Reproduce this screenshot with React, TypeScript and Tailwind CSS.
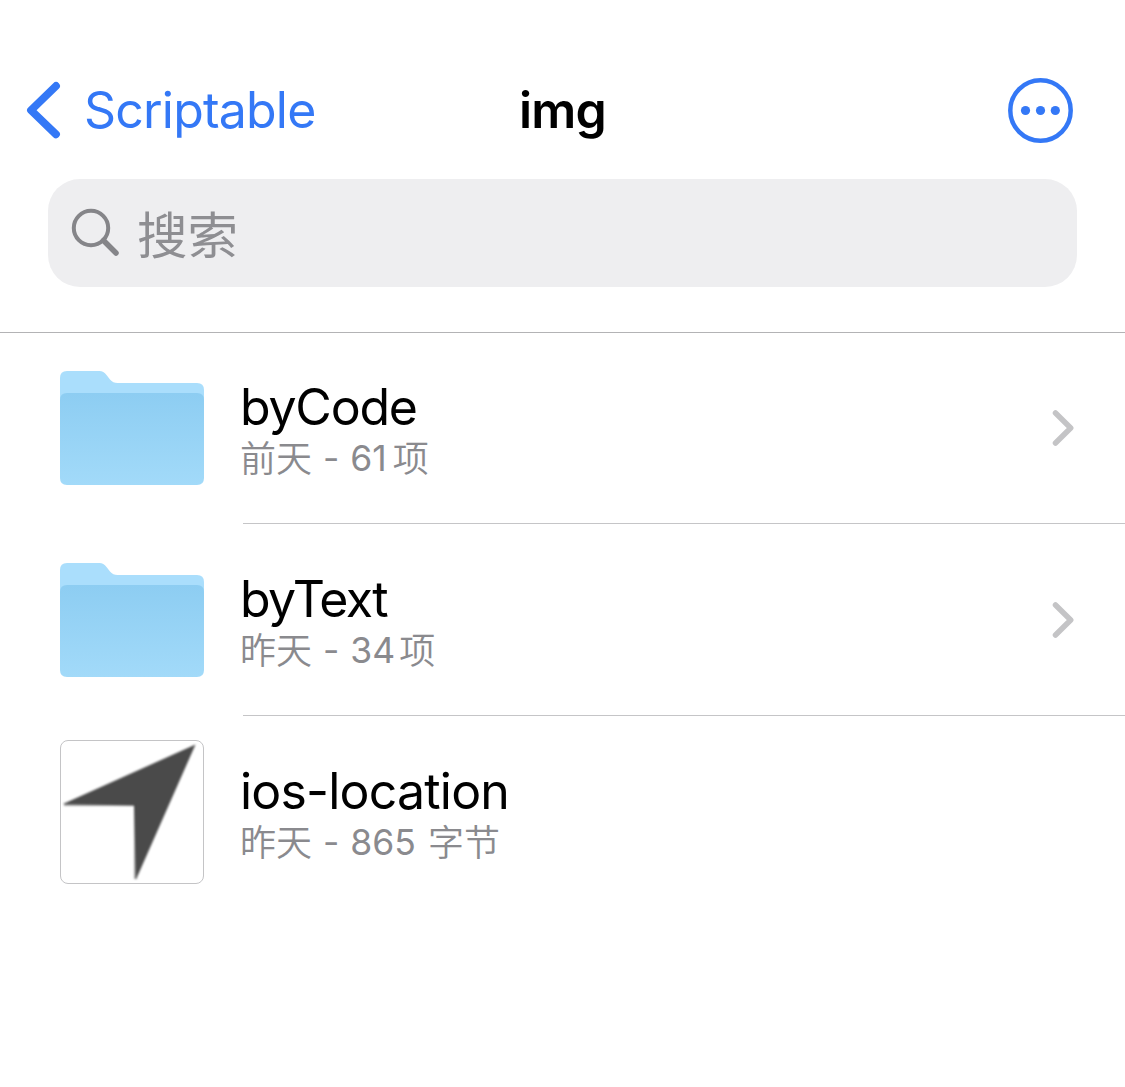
import type { ReactNode } from "react";

const latin = "font-['Inter','Noto_Sans_CJK_SC',sans-serif]";

function Folder({ id }: { id: string }) {
  return (
    <svg width="144" height="114" viewBox="0 0 144 114" className="block">
      <defs>
        <linearGradient id={id} x1="0" y1="0" x2="0" y2="1">
          <stop offset="0" stopColor="#8dcdf2" />
          <stop offset="1" stopColor="#a2daf9" />
        </linearGradient>
      </defs>
      <path
        d="M0 7Q0 0 7 0H39.500Q43.500 0 46.500 4L50 8.500Q53 12 57.500 12H137Q144 12 144 19V70H0Z"
        fill="#aadefc"
      />
      <path
        d="M0 29Q0 22 7 22H137Q144 22 144 29V107Q144 114 137 114H7Q0 114 0 107Z"
        fill={`url(#${id})`}
      />
    </svg>
  );
}

function LocationThumb() {
  return (
    <div className="h-36 w-36 rounded-[8px] border border-[#c4c4c6] bg-white">
      <svg width="142" height="142" viewBox="0 0 142 142" className="block blur-[1px]">
        <path d="M2 63L134.500 3.500L75 138.500L73 64.500Z" fill="#4a4a4a" />
        <path d="M3 63.500H74.500V138" fill="none" stroke="#4a4a4a" strokeOpacity=".6" strokeWidth="2.500" />
      </svg>
    </div>
  );
}

function Row({
  icon,
  title,
  spacing,
  detail,
  arrow,
  className,
  iconClass,
}: {
  icon: ReactNode;
  title: string;
  spacing: string;
  detail: ReactNode;
  arrow?: boolean;
  className: string;
  iconClass: string;
}) {
  return (
    <li className={`flex pl-[60px] ${className}`}>
      <div className={`w-[183px] shrink-0 ${iconClass}`}>{icon}</div>
      <div className={`flex flex-1 items-center justify-between pr-[49px] ${arrow ? "border-b border-[#c5c5c7]" : ""}`}>
        <div className="-ml-[3px] pt-[4px]">
          <div className={`text-[50px] leading-[56px] text-black ${spacing}`}>{title}</div>
          <div className="flex h-[46px] items-end whitespace-pre text-[36px] font-[350] leading-[44px] text-[#8a8a8e]">
            {detail}
          </div>
        </div>
        {arrow && (
          <svg width="24" height="38" viewBox="0 0 24 38" className="block">
            <path
              d="M3.500 4L18.700 19L3.500 34"
              fill="none"
              stroke="#c4c4c6"
              strokeWidth="5.500"
              strokeLinecap="round"
              strokeLinejoin="round"
            />
          </svg>
        )}
      </div>
    </li>
  );
}

export default function App() {
  return (
    <div className={`min-h-[1087px] w-[1125px] bg-white ${latin}`}>
      <header className="h-[333px] border-b border-[#b3b3b5]">
        <nav className="grid h-[179px] grid-cols-[1fr_auto_1fr] items-center pt-[41px]">
          <div className="flex items-center pl-[25px] text-[#3478f6]">
            <svg width="40" height="60" viewBox="0 0 40 60" className="block">
              <path
                d="M31 6L6 30.200L31 54.400"
                fill="none"
                stroke="currentColor"
                strokeWidth="7.800"
                strokeLinecap="round"
                strokeLinejoin="round"
              />
            </svg>
            <span className="ml-[19px] text-[50px] leading-[60px] tracking-[-0.800px]">Scriptable</span>
          </div>
          <h1 className="text-[50px] font-semibold leading-[60px] tracking-[-0.800px] text-black">img</h1>
          <svg width="66" height="66" viewBox="0 0 66 66" className="mr-[51px] block justify-self-end">
            <circle cx="32.500" cy="33.500" r="30.200" fill="none" stroke="#3478f6" strokeWidth="4.500" />
            <g fill="#3478f6">
              <circle cx="17.500" cy="33.500" r="4.600" />
              <circle cx="32.500" cy="33.500" r="4.600" />
              <circle cx="47.300" cy="33.500" r="4.600" />
            </g>
          </svg>
        </nav>
        <div className="mx-12 flex h-[108px] items-center rounded-[32px] bg-[#eeeef0] pl-[23px]">
          <svg width="50" height="50" viewBox="0 0 50 50" className="block">
            <g fill="none" stroke="#858589" strokeLinecap="round">
              <circle cx="20" cy="20" r="17.200" strokeWidth="4" />
              <path d="M32.500 32.500L45 45" strokeWidth="5.500" />
            </g>
          </svg>
          <span className="ml-[16px] pt-[6px] text-[50.500px] font-normal leading-[60px] text-[#8e8e92]">搜索</span>
        </div>
      </header>
      <ul>
        <Row
          className="h-[191px]"
          iconClass="pt-[38px]"
          icon={<Folder id="folder-code" />}
          title="byCode"
          spacing="tracking-[-1.200px]"
          arrow
          detail={
            <>
              <span>前天</span>
              <span className="ml-[11px] text-[35.500px] font-normal">-</span>
              <span className="ml-[11px] text-[35.500px] font-normal">61</span>
              <span className="ml-[6px]">项</span>
            </>
          }
        />
        <Row
          className="h-[192px]"
          iconClass="pt-[39px]"
          icon={<Folder id="folder-text" />}
          title="byText"
          spacing="tracking-[-1.700px]"
          arrow
          detail={
            <>
              <span>昨天</span>
              <span className="ml-[11px] text-[35.500px] font-normal">-</span>
              <span className="ml-[11px] text-[35.500px] font-normal">34</span>
              <span className="ml-[4px]">项</span>
            </>
          }
        />
        <Row
          className="h-[192px]"
          iconClass="pt-[24px]"
          icon={<LocationThumb />}
          title="ios-location"
          spacing="tracking-[-0.800px]"
          detail={
            <>
              <span>昨天</span>
              <span className="ml-[11px] text-[35.500px] font-normal">-</span>
              <span className="ml-[11px] text-[35.500px] font-normal">865</span>
              <span className="ml-[12px]">字节</span>
            </>
          }
        />
      </ul>
    </div>
  );
}
